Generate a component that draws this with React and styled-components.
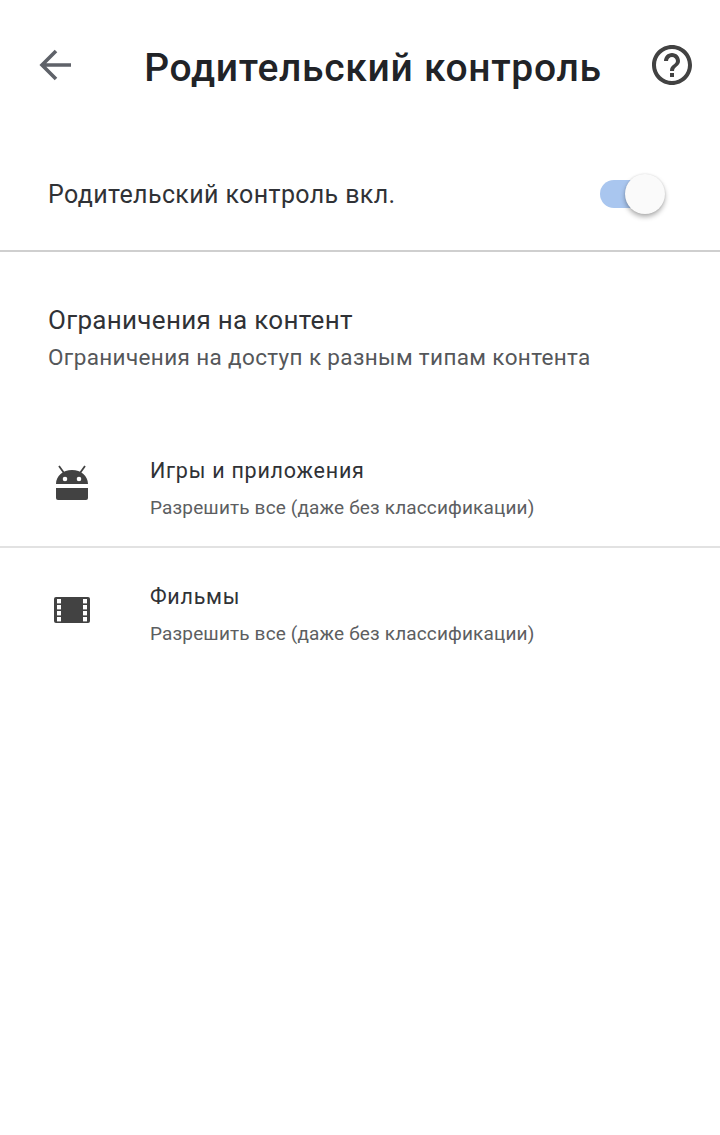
import React from "react";
import styled, { createGlobalStyle } from "styled-components";

const GlobalStyle = createGlobalStyle`
  html, body {
    margin: 0;
    padding: 0;
    background: #fff;
  }
  body {
    font-family: Roboto, "Noto Sans", "Liberation Sans", sans-serif;
    color: #212327;
  }
`;

const Page = styled.div`
  width: 720px;
  height: 1135px;
  overflow: hidden;
  background: #fff;
`;

const Header = styled.header`
  height: 132px;
  box-sizing: border-box;
  display: flex;
  align-items: center;
  justify-content: space-between;
  padding: 0 24px 2px 38px;
`;

const IconButton = styled.button`
  border: 0;
  padding: 0;
  background: none;
  display: flex;
  width: ${(props) => props.size}px;
  height: ${(props) => props.size}px;
`;

const Title = styled.h1`
  margin: 6px 0 0 26px;
  font-size: 39px;
  font-weight: 500;
  line-height: 44px;
  letter-spacing: 0.7px;
  white-space: nowrap;
  color: #212327;
`;

const SwitchRow = styled.div`
  height: 120px;
  display: flex;
  align-items: center;
  justify-content: space-between;
  padding: 6px 54px 0 48px;
  box-sizing: border-box;
  border-bottom: 2px solid #cfcfcf;
`;

const SwitchLabel = styled.span`
  font-size: 25px;
  letter-spacing: 0.38px;
  color: #303236;
`;

const Switch = styled.div`
  position: relative;
  width: 66px;
  height: 28px;
`;

const Track = styled.div`
  width: 50px;
  height: 28px;
  border-radius: 14px;
  background: #a9c6ef;
`;

const Thumb = styled.div`
  position: absolute;
  left: 25px;
  top: -6px;
  width: 40px;
  height: 40px;
  border-radius: 50%;
  background: #fafafa;
  box-shadow: 0 3px 5px rgba(0, 0, 0, 0.3), 0 0 2px rgba(0, 0, 0, 0.12);
`;

const Section = styled.section`
  padding: 49px 48px 0;
  height: 170px;
  box-sizing: border-box;
`;

const SectionTitle = styled.div`
  font-size: 26px;
  line-height: 38px;
  letter-spacing: 0.3px;
  color: #303236;
`;

const SectionText = styled.div`
  font-size: 22.5px;
  line-height: 36px;
  letter-spacing: 0.36px;
  color: #55575a;
`;

const Row = styled.div`
  display: flex;
  align-items: center;
  height: 126px;
  box-sizing: border-box;
  padding-left: 52px;
  border-bottom: 2px solid ${(props) => (props.divided ? "#e2e2e2" : "transparent")};
`;

const RowIcon = styled.div`
  width: 40px;
  height: 40px;
  margin-right: 58px;
  display: flex;
`;

const RowBody = styled.div`
  display: flex;
  flex-direction: column;
  gap: 12px;
  padding-top: 10px;
`;

const RowTitle = styled.div`
  font-size: 21.5px;
  line-height: 26px;
  letter-spacing: 0.75px;
  color: #303236;
`;

const RowText = styled.div`
  font-size: 19px;
  line-height: 24px;
  letter-spacing: 0.15px;
  color: #5c5e61;
`;

function BackIcon() {
  return (
    <svg width="34" height="34" viewBox="0 0 34 34" fill="none" stroke="#5f6269" strokeWidth="3.6">
      <path d="M33 17H4M18 3 4 17l14 14" />
    </svg>
  );
}

function HelpIcon() {
  return (
    <svg width="48" height="48" viewBox="0 0 24 24" fill="#424242">
      <path d="M11 18h2v-2h-2v2zm1-16C6.48 2 2 6.48 2 12s4.480 10 10 10 10-4.480 10-10S17.520 2 12 2zm0 18c-4.410 0-8-3.590-8-8s3.590-8 8-8 8 3.590 8 8-3.590 8-8 8zm0-14c-2.210 0-4 1.790-4 4h2c0-1.100.9-2 2-2s2 .9 2 2c0 2-3 1.750-3 5h2c0-2.250 3-2.500 3-5 0-2.210-1.790-4-4-4z" />
    </svg>
  );
}

function AndroidIcon() {
  return (
    <svg width="40" height="40" viewBox="0 0 40 40" fill="#424242">
      <path d="M7 2l5 7M33 2l-5 7" stroke="#424242" strokeWidth="1.8" />
      <path
        fillRule="evenodd"
        d="M4 20C4 12 11 6 20 6s16 6 16 14H4zm9-7.300a2.300 2.300 0 1 0 0 4.600 2.300 2.300 0 0 0 0-4.600zm14 0a2.300 2.300 0 1 0 0 4.600 2.300 2.300 0 0 0 0-4.600z"
      />
      <path d="M4 24h32v10a2 2 0 0 1-2 2H6a2 2 0 0 1-2-2V24z" />
    </svg>
  );
}

function FilmIcon() {
  const holes = [9, 15, 21, 27];
  return (
    <svg width="40" height="40" viewBox="0 0 40 40">
      <rect x="2" y="7" width="36" height="26" rx="2" fill="#424242" />
      {holes.map((y) => (
        <g key={y} fill="#fff">
          <rect x="5" y={y} width="4" height="4.4" />
          <rect x="31" y={y} width="4" height="4.4" />
        </g>
      ))}
    </svg>
  );
}

const limits = [
  { title: "Игры и приложения", Icon: AndroidIcon, divided: true },
  { title: "Фильмы", Icon: FilmIcon, divided: false },
];

export default function App() {
  return (
    <Page>
      <GlobalStyle />
      <Header>
        <IconButton size={34}>
          <BackIcon />
        </IconButton>
        <Title>Родительский контроль</Title>
        <IconButton size={48}>
          <HelpIcon />
        </IconButton>
      </Header>
      <SwitchRow>
        <SwitchLabel>Родительский контроль вкл.</SwitchLabel>
        <Switch>
          <Track />
          <Thumb />
        </Switch>
      </SwitchRow>
      <Section>
        <SectionTitle>Ограничения на контент</SectionTitle>
        <SectionText>Ограничения на доступ к разным типам контента</SectionText>
      </Section>
      {limits.map(({ title, Icon, divided }) => (
        <Row key={title} divided={divided}>
          <RowIcon>
            <Icon />
          </RowIcon>
          <RowBody>
            <RowTitle>{title}</RowTitle>
            <RowText>Разрешить все (даже без классификации)</RowText>
          </RowBody>
        </Row>
      ))}
    </Page>
  );
}
